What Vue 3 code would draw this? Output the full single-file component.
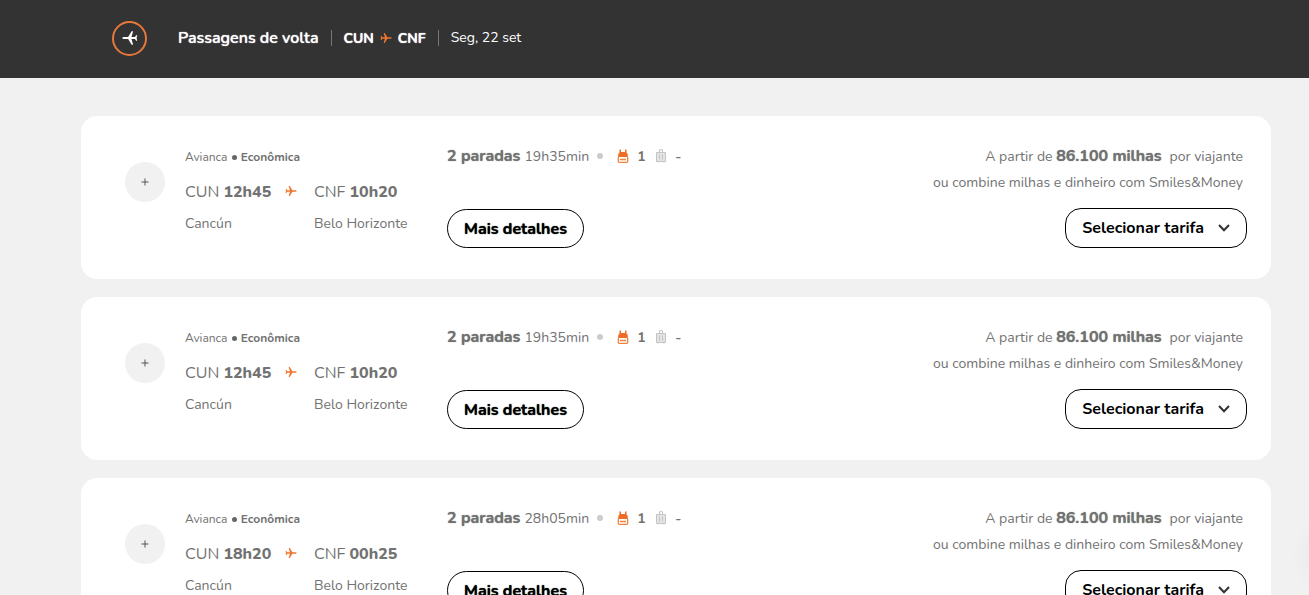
<script setup>
const flights = [
  { id: 1, depart: '12h45', arrive: '10h20', duration: '19h35min' },
  { id: 2, depart: '12h45', arrive: '10h20', duration: '19h35min' },
  { id: 3, depart: '18h20', arrive: '00h25', duration: '28h05min' },
]
const planePath = 'M23.500 12c0-.8-1.500-1.500-3-1.500h-5.700L9.500 2H7.300l2.500 8.500H4.600L2.800 8H1.200l.9 4-.9 4h1.600l1.800-2.500h5.200L7.300 22h2.200l5.300-8.500h5.700c1.500 0 3-.7 3-1.500z'
</script>

<template>
  <div class="page">
    <header class="topbar">
      <span class="badge">
        <svg class="badge-plane" viewBox="0 0 24 24" aria-hidden="true"><path :d="planePath" /></svg>
      </span>
      <h1 class="title">Passagens de volta</h1>
      <div class="leg">
        <strong>CUN</strong>
        <svg class="plane" viewBox="0 0 24 24" aria-hidden="true"><path :d="planePath" /></svg>
        <strong>CNF</strong>
      </div>
      <span class="date">Seg, 22 set</span>
    </header>

    <main class="list">
      <article v-for="f in flights" :key="f.id" class="card">
        <button class="plus" type="button" aria-label="Adicionar voo">
          <svg viewBox="0 0 8 8" aria-hidden="true"><path d="M4 .5v7M.5 4h7" /></svg>
        </button>

        <section class="route">
          <p class="airline">Avianca <i class="dot"></i> <b>Econômica</b></p>
          <p class="time">CUN <b>{{ f.depart }}</b></p>
          <svg class="plane" viewBox="0 0 24 24" aria-hidden="true"><path :d="planePath" /></svg>
          <p class="time">CNF <b>{{ f.arrive }}</b></p>
          <p class="city">Cancún</p>
          <p class="city arrival">Belo Horizonte</p>
        </section>

        <section class="stops">
          <p class="summary">
            <b class="count">2 paradas</b>
            <span>{{ f.duration }}</span>
            <i class="bullet"></i>
            <svg class="bag" viewBox="0 0 12 14" aria-hidden="true">
              <path class="bag-body" d="M1.200 8V6Q1.200 4.300 2.500 3.500V.5H4V3h4V.5h1.500v3q1.300.8 1.300 2.500v2z" />
              <path class="bag-line" d="M1.300 8v4.300q0 1 1 1h7.400q1 0 1-1V8M3 10.500h6" />
            </svg>
            <b class="qty">1</b>
            <svg class="case" viewBox="0 0 12 14" aria-hidden="true">
              <path class="case-body" d="M1.500 3.500h9v9h-9z" />
              <path class="case-line" d="M4.500 3V.7h3V3M1.500 3.500h9v9h-9zM4.500 5.500v5M7.500 5.500v5M3 12.500v1M9 12.500v1" />
            </svg>
            <b class="qty">-</b>
          </p>
          <button class="outline details" type="button">Mais detalhes</button>
        </section>

        <section class="fare">
          <p class="price">A partir de <b>86.100 milhas</b><span>por viajante</span></p>
          <p class="combine">ou combine milhas e dinheiro com Smiles&amp;Money</p>
          <button class="outline select" type="button" aria-expanded="false">
            Selecionar tarifa
            <svg viewBox="0 0 12 8" aria-hidden="true"><path d="M1 1l5 5.300L11 1" /></svg>
          </button>
        </section>
      </article>
    </main>
    <div class="edge-shadow"></div>
  </div>
</template>

<style>
body {
  background: #f1f1f1;
}
</style>

<style scoped>
.page {
  position: relative;
  height: 100vh;
  overflow: hidden;
  background: #f1f1f1;
  color: #727272;
  font-family: Nunito, Lato, "Open Sans", sans-serif;
  font-size: 14px;
}
p, h1 {
  margin: 0;
  white-space: nowrap;
}
.topbar {
  display: flex;
  align-items: center;
  height: 78px;
  padding: 0 112px 2px;
  box-sizing: border-box;
  background: #333;
  color: #fff;
  line-height: 20px;
}
.badge {
  display: flex;
  align-items: center;
  justify-content: center;
  width: 35px;
  height: 35px;
  box-sizing: border-box;
  border: 2px solid #e8783a;
  border-radius: 50%;
}
.badge-plane {
  width: 16px;
  height: 16px;
  fill: #fff;
  transform: scaleX(-1);
}
.title {
  margin: 0 12px 0 31px;
  font-size: 16px;
  font-weight: 600;
  text-shadow: 0 0 1px #fff;
}
.leg {
  display: flex;
  align-items: center;
  gap: 6px;
  height: 16px;
  padding: 0 12px;
  border: solid #777;
  border-width: 0 1px;
}
.leg strong {
  padding-top: 2px;
  font-weight: 700;
  text-shadow: 0 0 1px #fff;
}
.date {
  padding-left: 12px;
}
.plane {
  width: 12px;
  height: 12px;
  fill: #ee762f;
}
.list {
  display: flex;
  flex-direction: column;
  gap: 18px;
  padding: 38px 38px 0 81px;
}
.card {
  display: grid;
  grid-template-columns: 40px 242px 1fr auto;
  column-gap: 20px;
  min-height: 163px;
  padding: 30px 24px 30px 44px;
  box-sizing: border-box;
  border-radius: 16px;
  background: #fff;
}
.plus {
  display: flex;
  align-items: center;
  justify-content: center;
  width: 40px;
  height: 40px;
  margin-top: 16px;
  padding: 0;
  border: 0;
  border-radius: 50%;
  background: #f1f1f1;
}
.plus svg {
  width: 8px;
  height: 8px;
  stroke: #555;
}
.route {
  display: grid;
  grid-template-columns: 100px 29px 1fr;
  grid-template-rows: 22px 24px 20px;
  row-gap: 11px;
  align-items: center;
  align-content: start;
}
.airline {
  grid-column: 1 / -1;
  font-size: 12px;
  line-height: 22px;
}
.dot {
  display: inline-block;
  width: 5px;
  height: 5px;
  margin: 0 1px;
  border-radius: 50%;
  background: #666;
  vertical-align: 1px;
}
.time {
  padding-top: 2px;
  font-size: 16px;
  line-height: 22px;
}
.time b {
  font-weight: 800;
}
.count, .price b, .details {
  text-shadow: 0 0 1px currentColor;
}
.city {
  line-height: 20px;
}
.arrival {
  grid-column: 3;
}
.summary {
  display: flex;
  align-items: center;
  height: 20px;
}
.count {
  margin-right: 4px;
  font-size: 16px;
}
.bullet {
  width: 6px;
  height: 6px;
  margin: 0 14px 0 8px;
  border-radius: 50%;
  background: #ccc;
}
.bag, .case {
  width: 12px;
  height: 14px;
}
.bag-body {
  fill: #ee6c25;
}
.bag-line {
  fill: none;
  stroke: #f0823f;
  stroke-width: 1.3;
}
.case-body {
  fill: #e4e4e4;
}
.case-line {
  fill: none;
  stroke: #c4c4c4;
}
.qty {
  width: 10px;
  margin: 0 8px;
}
.outline {
  height: 40px;
  box-sizing: border-box;
  padding: 0 16px;
  border: 1px solid #000;
  border-radius: 20px;
  background: #fff;
  color: #000;
  font-family: inherit;
  font-size: 16px;
  font-weight: 700;
  white-space: nowrap;
}
.details {
  height: 39px;
  margin-top: 43px;
}
.fare {
  display: flex;
  flex-direction: column;
  align-items: flex-end;
}
.price, .combine {
  padding-right: 4px;
  line-height: 20px;
}
.price b {
  font-size: 16px;
}
.price span {
  margin-left: 8px;
}
.combine {
  margin-top: 6px;
}
.select {
  display: flex;
  align-items: center;
  gap: 14px;
  margin-top: 15px;
  border-radius: 16px;
}
.select svg {
  width: 12px;
  height: 8px;
  fill: none;
  stroke: #333;
  stroke-width: 2;
}
.edge-shadow {
  position: absolute;
  right: -60px;
  bottom: 10px;
  width: 60px;
  height: 60px;
  border-radius: 50%;
  box-shadow: 0 0 24px rgba(0, 0, 0, 0.05);
}
</style>
